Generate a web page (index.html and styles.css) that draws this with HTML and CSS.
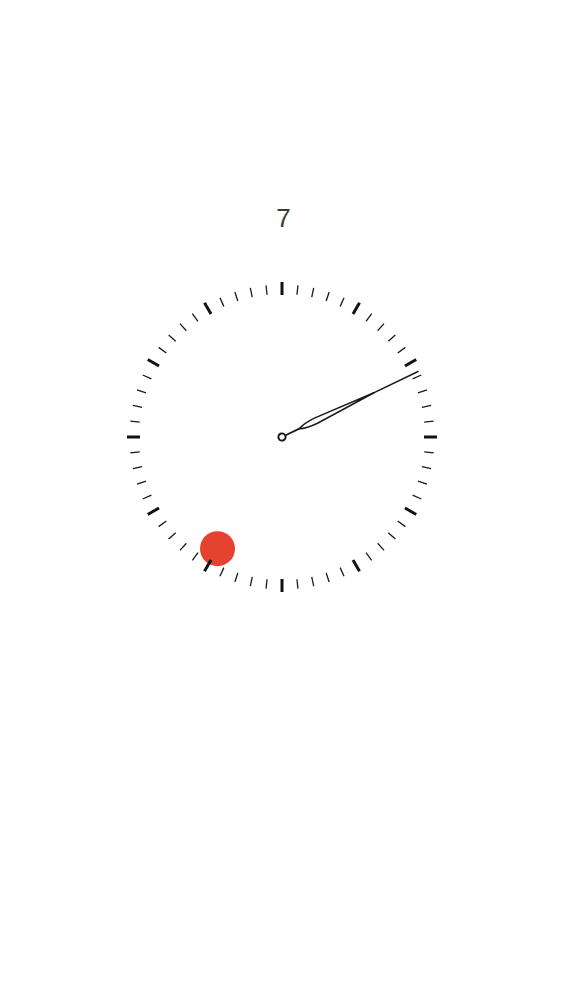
FILE: index.html
```html
<!DOCTYPE html>
<html>
<head>
<meta charset="utf-8">
<link rel="stylesheet" href="styles.css">
</head>
<body>
<main class="screen">
  <div class="count">7</div>
  <svg class="dial" width="320" height="320" viewBox="0 0 320 320">
    <g class="ticks">
      <line class="major" x1="160" y1="5" x2="160" y2="18" transform="rotate(0 160 160)"/>
      <line x1="160" y1="7.5" x2="160" y2="17" transform="rotate(6 160 160)"/>
      <line x1="160" y1="7.5" x2="160" y2="17" transform="rotate(12 160 160)"/>
      <line x1="160" y1="7.5" x2="160" y2="17" transform="rotate(18 160 160)"/>
      <line x1="160" y1="7.5" x2="160" y2="17" transform="rotate(24 160 160)"/>
      <line class="major" x1="160" y1="5" x2="160" y2="18" transform="rotate(30 160 160)"/>
      <line x1="160" y1="7.5" x2="160" y2="17" transform="rotate(36 160 160)"/>
      <line x1="160" y1="7.5" x2="160" y2="17" transform="rotate(42 160 160)"/>
      <line x1="160" y1="7.5" x2="160" y2="17" transform="rotate(48 160 160)"/>
      <line x1="160" y1="7.5" x2="160" y2="17" transform="rotate(54 160 160)"/>
      <line class="major" x1="160" y1="5" x2="160" y2="18" transform="rotate(60 160 160)"/>
      <line x1="160" y1="7.5" x2="160" y2="17" transform="rotate(66 160 160)"/>
      <line x1="160" y1="7.5" x2="160" y2="17" transform="rotate(72 160 160)"/>
      <line x1="160" y1="7.5" x2="160" y2="17" transform="rotate(78 160 160)"/>
      <line x1="160" y1="7.5" x2="160" y2="17" transform="rotate(84 160 160)"/>
      <line class="major" x1="160" y1="5" x2="160" y2="18" transform="rotate(90 160 160)"/>
      <line x1="160" y1="7.5" x2="160" y2="17" transform="rotate(96 160 160)"/>
      <line x1="160" y1="7.5" x2="160" y2="17" transform="rotate(102 160 160)"/>
      <line x1="160" y1="7.5" x2="160" y2="17" transform="rotate(108 160 160)"/>
      <line x1="160" y1="7.5" x2="160" y2="17" transform="rotate(114 160 160)"/>
      <line class="major" x1="160" y1="5" x2="160" y2="18" transform="rotate(120 160 160)"/>
      <line x1="160" y1="7.5" x2="160" y2="17" transform="rotate(126 160 160)"/>
      <line x1="160" y1="7.5" x2="160" y2="17" transform="rotate(132 160 160)"/>
      <line x1="160" y1="7.5" x2="160" y2="17" transform="rotate(138 160 160)"/>
      <line x1="160" y1="7.5" x2="160" y2="17" transform="rotate(144 160 160)"/>
      <line class="major" x1="160" y1="5" x2="160" y2="18" transform="rotate(150 160 160)"/>
      <line x1="160" y1="7.5" x2="160" y2="17" transform="rotate(156 160 160)"/>
      <line x1="160" y1="7.5" x2="160" y2="17" transform="rotate(162 160 160)"/>
      <line x1="160" y1="7.5" x2="160" y2="17" transform="rotate(168 160 160)"/>
      <line x1="160" y1="7.5" x2="160" y2="17" transform="rotate(174 160 160)"/>
      <line class="major" x1="160" y1="5" x2="160" y2="18" transform="rotate(180 160 160)"/>
      <line x1="160" y1="7.5" x2="160" y2="17" transform="rotate(186 160 160)"/>
      <line x1="160" y1="7.5" x2="160" y2="17" transform="rotate(192 160 160)"/>
      <line x1="160" y1="7.5" x2="160" y2="17" transform="rotate(198 160 160)"/>
      <line x1="160" y1="7.5" x2="160" y2="17" transform="rotate(204 160 160)"/>
      <line x1="160" y1="7.5" x2="160" y2="17" transform="rotate(216 160 160)"/>
      <line x1="160" y1="7.5" x2="160" y2="17" transform="rotate(222 160 160)"/>
      <line x1="160" y1="7.5" x2="160" y2="17" transform="rotate(228 160 160)"/>
      <line x1="160" y1="7.5" x2="160" y2="17" transform="rotate(234 160 160)"/>
      <line class="major" x1="160" y1="5" x2="160" y2="18" transform="rotate(240 160 160)"/>
      <line x1="160" y1="7.5" x2="160" y2="17" transform="rotate(246 160 160)"/>
      <line x1="160" y1="7.5" x2="160" y2="17" transform="rotate(252 160 160)"/>
      <line x1="160" y1="7.5" x2="160" y2="17" transform="rotate(258 160 160)"/>
      <line x1="160" y1="7.5" x2="160" y2="17" transform="rotate(264 160 160)"/>
      <line class="major" x1="160" y1="5" x2="160" y2="18" transform="rotate(270 160 160)"/>
      <line x1="160" y1="7.5" x2="160" y2="17" transform="rotate(276 160 160)"/>
      <line x1="160" y1="7.5" x2="160" y2="17" transform="rotate(282 160 160)"/>
      <line x1="160" y1="7.5" x2="160" y2="17" transform="rotate(288 160 160)"/>
      <line x1="160" y1="7.5" x2="160" y2="17" transform="rotate(294 160 160)"/>
      <line class="major" x1="160" y1="5" x2="160" y2="18" transform="rotate(300 160 160)"/>
      <line x1="160" y1="7.5" x2="160" y2="17" transform="rotate(306 160 160)"/>
      <line x1="160" y1="7.5" x2="160" y2="17" transform="rotate(312 160 160)"/>
      <line x1="160" y1="7.5" x2="160" y2="17" transform="rotate(318 160 160)"/>
      <line x1="160" y1="7.5" x2="160" y2="17" transform="rotate(324 160 160)"/>
      <line class="major" x1="160" y1="5" x2="160" y2="18" transform="rotate(330 160 160)"/>
      <line x1="160" y1="7.5" x2="160" y2="17" transform="rotate(336 160 160)"/>
      <line x1="160" y1="7.5" x2="160" y2="17" transform="rotate(342 160 160)"/>
      <line x1="160" y1="7.5" x2="160" y2="17" transform="rotate(348 160 160)"/>
      <line x1="160" y1="7.5" x2="160" y2="17" transform="rotate(354 160 160)"/>
    </g>
    <circle class="dot" cx="95.5" cy="271.7" r="17.5"/>
    <line class="major-line" x1="160" y1="5" x2="160" y2="18" transform="rotate(210 160 160)"/>
    <g class="hand" transform="rotate(64.3 160 160)">
      <line class="hand-line" x1="160" y1="156" x2="160" y2="139"/>
      <line class="hand-tip" x1="160" y1="60" x2="160" y2="9"/>
      <path class="hand-leaf" d="M160,141 Q163,134 163,122 L160,58 L157,122 Q157,134 160,141 Z"/>
      <circle class="pivot" cx="160" cy="160" r="3.6"/>
    </g>
  </svg>
</main>
</body>
</html>
```
FILE: styles.css
```css
html, body {
  margin: 0;
  padding: 0;
  background: #ffffff;
}

.screen {
  width: 563px;
  height: 1000px;
  display: flex;
  flex-direction: column;
  align-items: center;
  padding-top: 205px;
  box-sizing: border-box;
}

.count {
  font-family: "Liberation Sans", Arial, sans-serif;
  font-size: 26px;
  line-height: 26px;
  color: #3a3a3a;
  padding-left: 4px;
}

.dial {
  display: block;
  margin-top: 46px;
  margin-left: 1px;
}

.ticks line {
  stroke: #1a1a1a;
  stroke-width: 1.3;
}

.ticks line.major,
.major-line {
  stroke: #111111;
  stroke-width: 3;
}

.dot {
  fill: #e5422f;
}

.hand-line,
.hand-tip {
  stroke: #1a1a1a;
  stroke-width: 1.8;
  stroke-linecap: round;
}

.hand-tip {
  stroke-width: 1.5;
}

.hand-leaf {
  fill: #ffffff;
  stroke: #1a1a1a;
  stroke-width: 1.5;
  stroke-linejoin: round;
}

.pivot {
  fill: #ffffff;
  stroke: #1a1a1a;
  stroke-width: 2;
}
```
